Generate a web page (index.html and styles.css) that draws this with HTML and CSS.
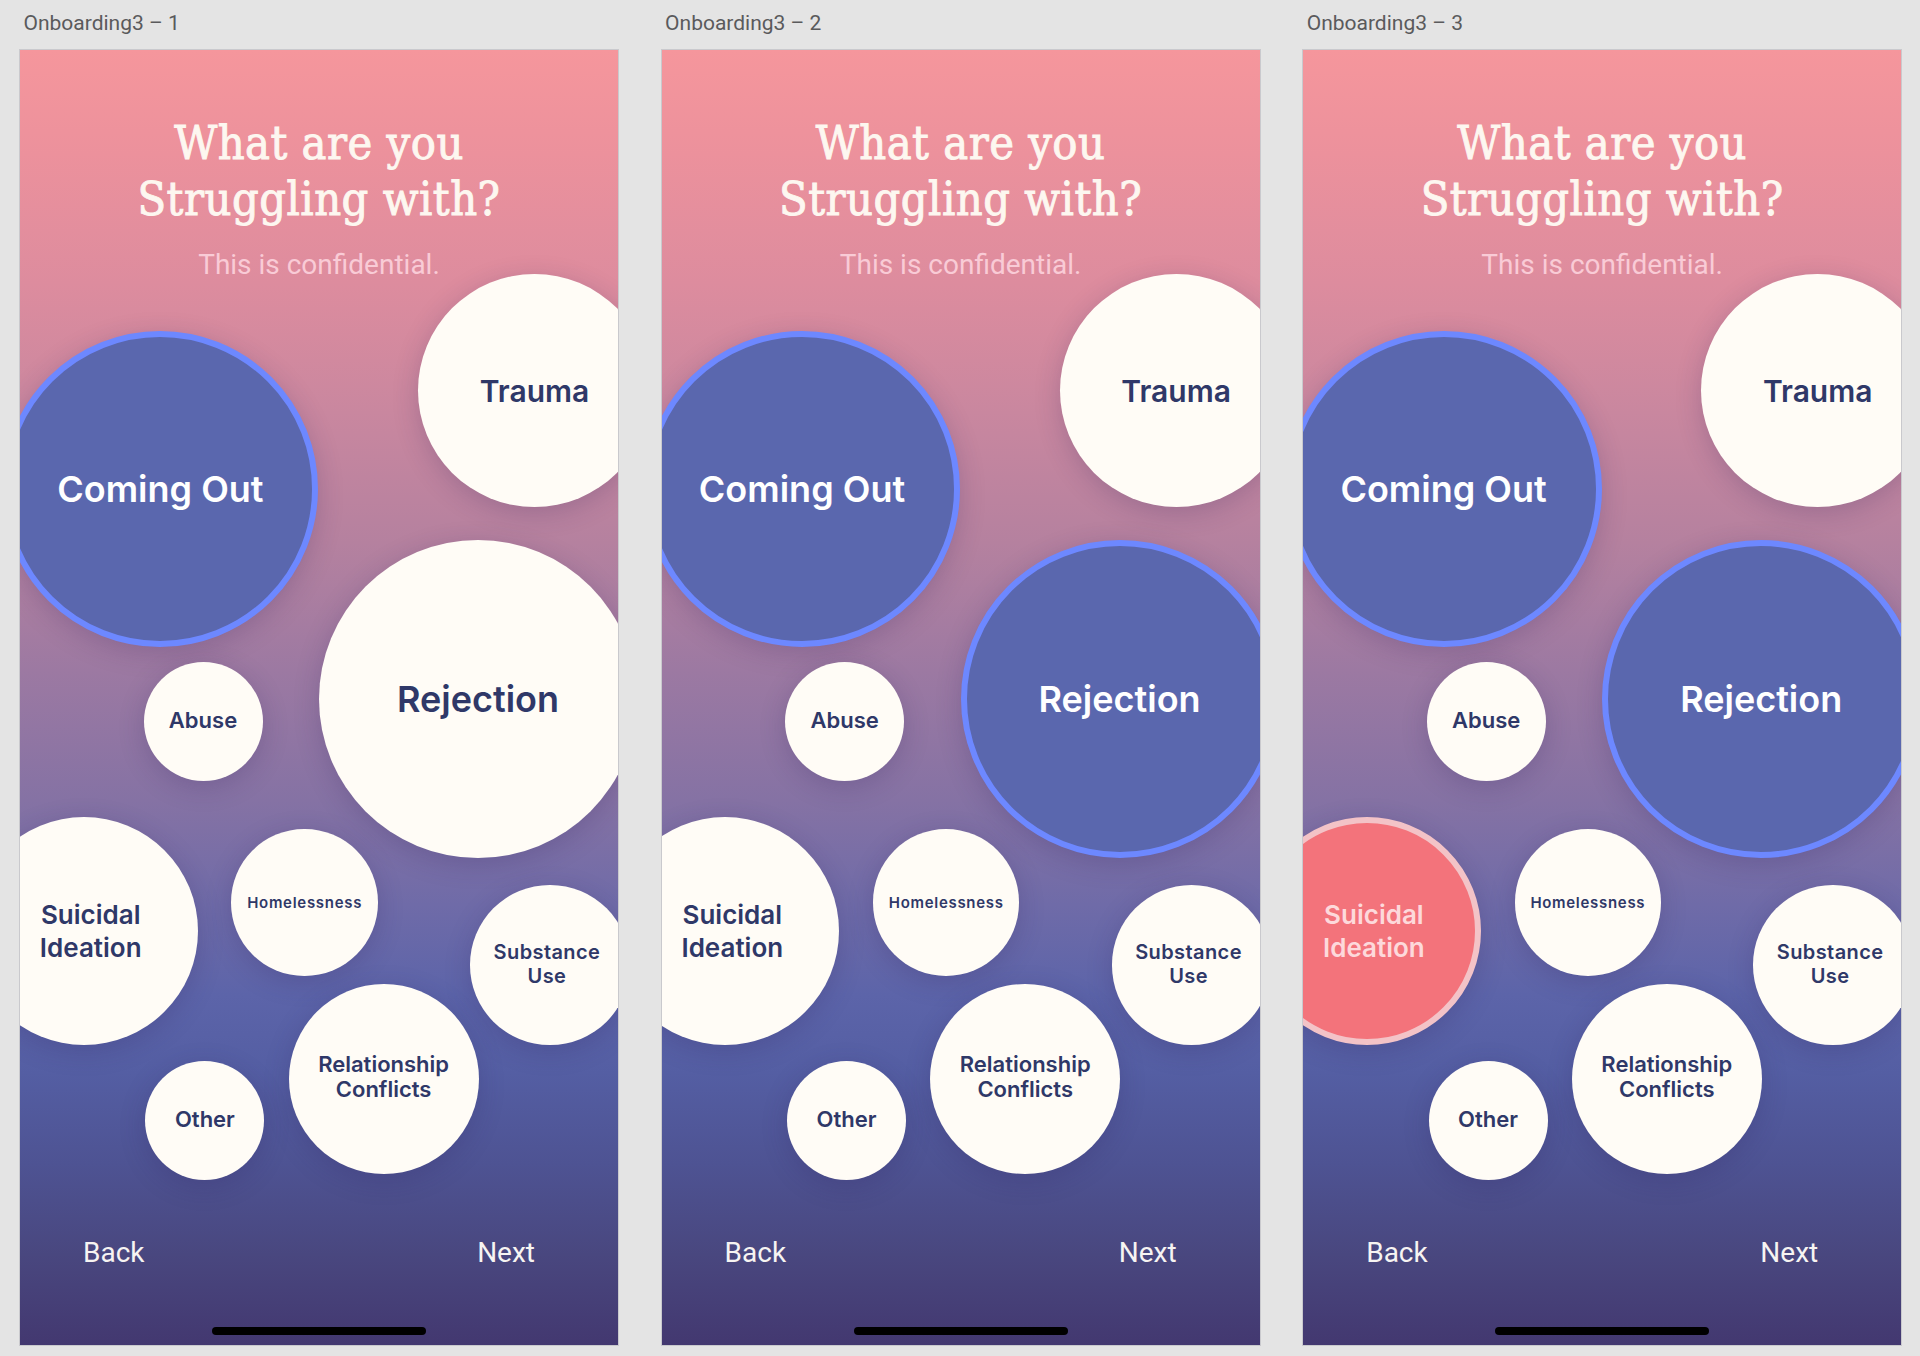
FILE: index.html
```html
<!DOCTYPE html>
<html lang="en">
<head>
<meta charset="utf-8">
<title>Onboarding3</title>
<link rel="stylesheet" href="styles.css">
</head>
<body>
<main class="board">
  <section class="artboard">
    <div class="artboard-label">Onboarding3 – 1</div>
    <div class="phone">
      <header class="head">
        <h1 class="title">What are you<br>Struggling with?</h1>
        <p class="subtitle">This is confidential.</p>
      </header>
      <div class="canvas">
        <div class="bubble b-coming selected"><span class="t-xl">Coming Out</span></div>
        <div class="bubble b-trauma"><span class="t-lg">Trauma</span></div>
        <div class="bubble b-rejection"><span class="t-xl">Rejection</span></div>
        <div class="bubble b-abuse"><span class="t-sm">Abuse</span></div>
        <div class="bubble b-suicidal"><span class="t-md">Suicidal<br>Ideation</span></div>
        <div class="bubble b-homeless"><span class="t-xs">Homelessness</span></div>
        <div class="bubble b-substance"><span class="t-s2">Substance<br>Use</span></div>
        <div class="bubble b-relationship"><span class="t-rel">Relationship<br>Conflicts</span></div>
        <div class="bubble b-other"><span class="t-sm">Other</span></div>
      </div>
      <nav class="nav"><span>Back</span><span>Next</span></nav>
      <div class="home-bar"></div>
    </div>
  </section>

  <section class="artboard">
    <div class="artboard-label">Onboarding3 – 2</div>
    <div class="phone">
      <header class="head">
        <h1 class="title">What are you<br>Struggling with?</h1>
        <p class="subtitle">This is confidential.</p>
      </header>
      <div class="canvas">
        <div class="bubble b-coming selected"><span class="t-xl">Coming Out</span></div>
        <div class="bubble b-trauma"><span class="t-lg">Trauma</span></div>
        <div class="bubble b-rejection selected"><span class="t-xl">Rejection</span></div>
        <div class="bubble b-abuse"><span class="t-sm">Abuse</span></div>
        <div class="bubble b-suicidal"><span class="t-md">Suicidal<br>Ideation</span></div>
        <div class="bubble b-homeless"><span class="t-xs">Homelessness</span></div>
        <div class="bubble b-substance"><span class="t-s2">Substance<br>Use</span></div>
        <div class="bubble b-relationship"><span class="t-rel">Relationship<br>Conflicts</span></div>
        <div class="bubble b-other"><span class="t-sm">Other</span></div>
      </div>
      <nav class="nav"><span>Back</span><span>Next</span></nav>
      <div class="home-bar"></div>
    </div>
  </section>

  <section class="artboard">
    <div class="artboard-label">Onboarding3 – 3</div>
    <div class="phone">
      <header class="head">
        <h1 class="title">What are you<br>Struggling with?</h1>
        <p class="subtitle">This is confidential.</p>
      </header>
      <div class="canvas">
        <div class="bubble b-coming selected"><span class="t-xl">Coming Out</span></div>
        <div class="bubble b-trauma"><span class="t-lg">Trauma</span></div>
        <div class="bubble b-rejection selected"><span class="t-xl">Rejection</span></div>
        <div class="bubble b-abuse"><span class="t-sm">Abuse</span></div>
        <div class="bubble b-suicidal alert"><span class="t-md">Suicidal<br>Ideation</span></div>
        <div class="bubble b-homeless"><span class="t-xs">Homelessness</span></div>
        <div class="bubble b-substance"><span class="t-s2">Substance<br>Use</span></div>
        <div class="bubble b-relationship"><span class="t-rel">Relationship<br>Conflicts</span></div>
        <div class="bubble b-other"><span class="t-sm">Other</span></div>
      </div>
      <nav class="nav"><span>Back</span><span>Next</span></nav>
      <div class="home-bar"></div>
    </div>
  </section>
</main>
</body>
</html>
```

FILE: styles.css
```css
* { box-sizing: border-box; }

html, body {
  margin: 0;
  padding: 0;
  background: #e4e4e4;
}

body {
  width: 1920px;
  height: 1356px;
  overflow: hidden;
  font-family: Roboto, "Liberation Sans", sans-serif;
}

.board {
  display: flex;
  gap: 41.6px;
  padding-left: 19px;
}

.artboard {
  width: 600px;
  display: flex;
  flex-direction: column;
}

.artboard-label {
  height: 49px;
  padding: 13px 0 0 4.5px;
  font-family: Roboto, "Liberation Sans", sans-serif;
  font-size: 21px;
  line-height: 21px;
  color: #5a5a5c;
}

.phone {
  width: 600px;
  height: 1297px;
  border: 1px solid #c9c9cd;
  overflow: hidden;
  display: flex;
  flex-direction: column;
  background: linear-gradient(180deg,
    #f5969c 0%,
    #ec919c 8%,
    #dd8c9e 18%,
    #c9879f 28%,
    #b5819f 38%,
    #9c79a2 48%,
    #8572a4 58%,
    #6f6ba8 66%,
    #5c64a9 73%,
    #545ea3 79%,
    #4e5393 86%,
    #49477f 93%,
    #433870 100%);
}

.head {
  height: 222px;
  flex: none;
  padding-top: 65px;
  text-align: center;
}

.title {
  margin: 0;
  font-family: "DejaVu Serif", "Liberation Serif", serif;
  font-stretch: condensed;
  font-weight: 400;
  font-size: 46.5px;
  line-height: 56px;
  color: #fdf7f0;
  letter-spacing: 0.5px;
  -webkit-text-stroke: 0.9px #fdf7f0;
}

.subtitle {
  margin: 21.5px 0 0;
  font-family: Roboto, "Liberation Sans", sans-serif;
  font-weight: 400;
  font-size: 28px;
  line-height: 32px;
  color: #f9cbd6;
}

.canvas {
  position: relative;
  height: 918px;
  flex: none;
}

.bubble {
  position: absolute;
  border-radius: 50%;
  background: #fffcf6;
  color: #2f3868;
  font-family: Inter, "Noto Sans", sans-serif;
  font-weight: 600;
  display: flex;
  align-items: center;
  justify-content: center;
  text-align: center;
  box-shadow: 0 6px 26px rgba(45, 30, 90, 0.22);
}

.bubble.selected {
  background: #5a67ae;
  border: 6px solid #6d88ff;
  color: #ffffff;
}

.bubble.alert {
  background: #f3737b;
  border: 6px solid #f3c3c7;
  color: #fdd9db;
}

.t-xl { font-size: 36px; line-height: 40px; }
.t-lg { font-size: 30px; line-height: 34px; }
.t-md { font-size: 26px; line-height: 33px; }
.t-rel { font-size: 22px; line-height: 25px; }
.t-sm { font-size: 22px; line-height: 26px; padding-bottom: 3px; }
.t-s2 { font-size: 20px; line-height: 23.5px; letter-spacing: 0.4px; }
.t-xs { font-size: 15px; line-height: 18px; letter-spacing: 0.7px; }

.b-coming { left: -17.6px; top: 58.5px; width: 316px; height: 316px; }
.b-trauma { left: 398px; top: 2px; width: 233px; height: 233px; }
.b-rejection { left: 299px; top: 268px; width: 318px; height: 318px; }
.b-abuse { left: 123.5px; top: 389.7px; width: 119px; height: 119px; }
.b-suicidal { left: -50.3px; top: 544.7px; width: 228px; height: 228px; padding-left: 14px; }
.b-homeless { left: 211.4px; top: 557.3px; width: 146.5px; height: 146.5px; }
.b-substance { left: 450.2px; top: 613px; width: 159.5px; height: 159.5px; padding-right: 6px; }
.b-relationship { left: 268.6px; top: 712.3px; width: 190px; height: 190px; padding-bottom: 4px; }
.b-other { left: 125.4px; top: 789px; width: 119px; height: 119px; }

.nav {
  flex: none;
  margin-top: 46px;
  height: 34px;
  display: flex;
  justify-content: space-between;
  padding: 0 83px 0 63px;
  font-family: Roboto, "Liberation Sans", sans-serif;
  font-weight: 400;
  font-size: 28px;
  line-height: 34px;
  color: #f7f4f2;
}

.home-bar {
  flex: none;
  align-self: center;
  margin-top: 57px;
  width: 214px;
  height: 8px;
  border-radius: 4px;
  background: #000;
}
```
